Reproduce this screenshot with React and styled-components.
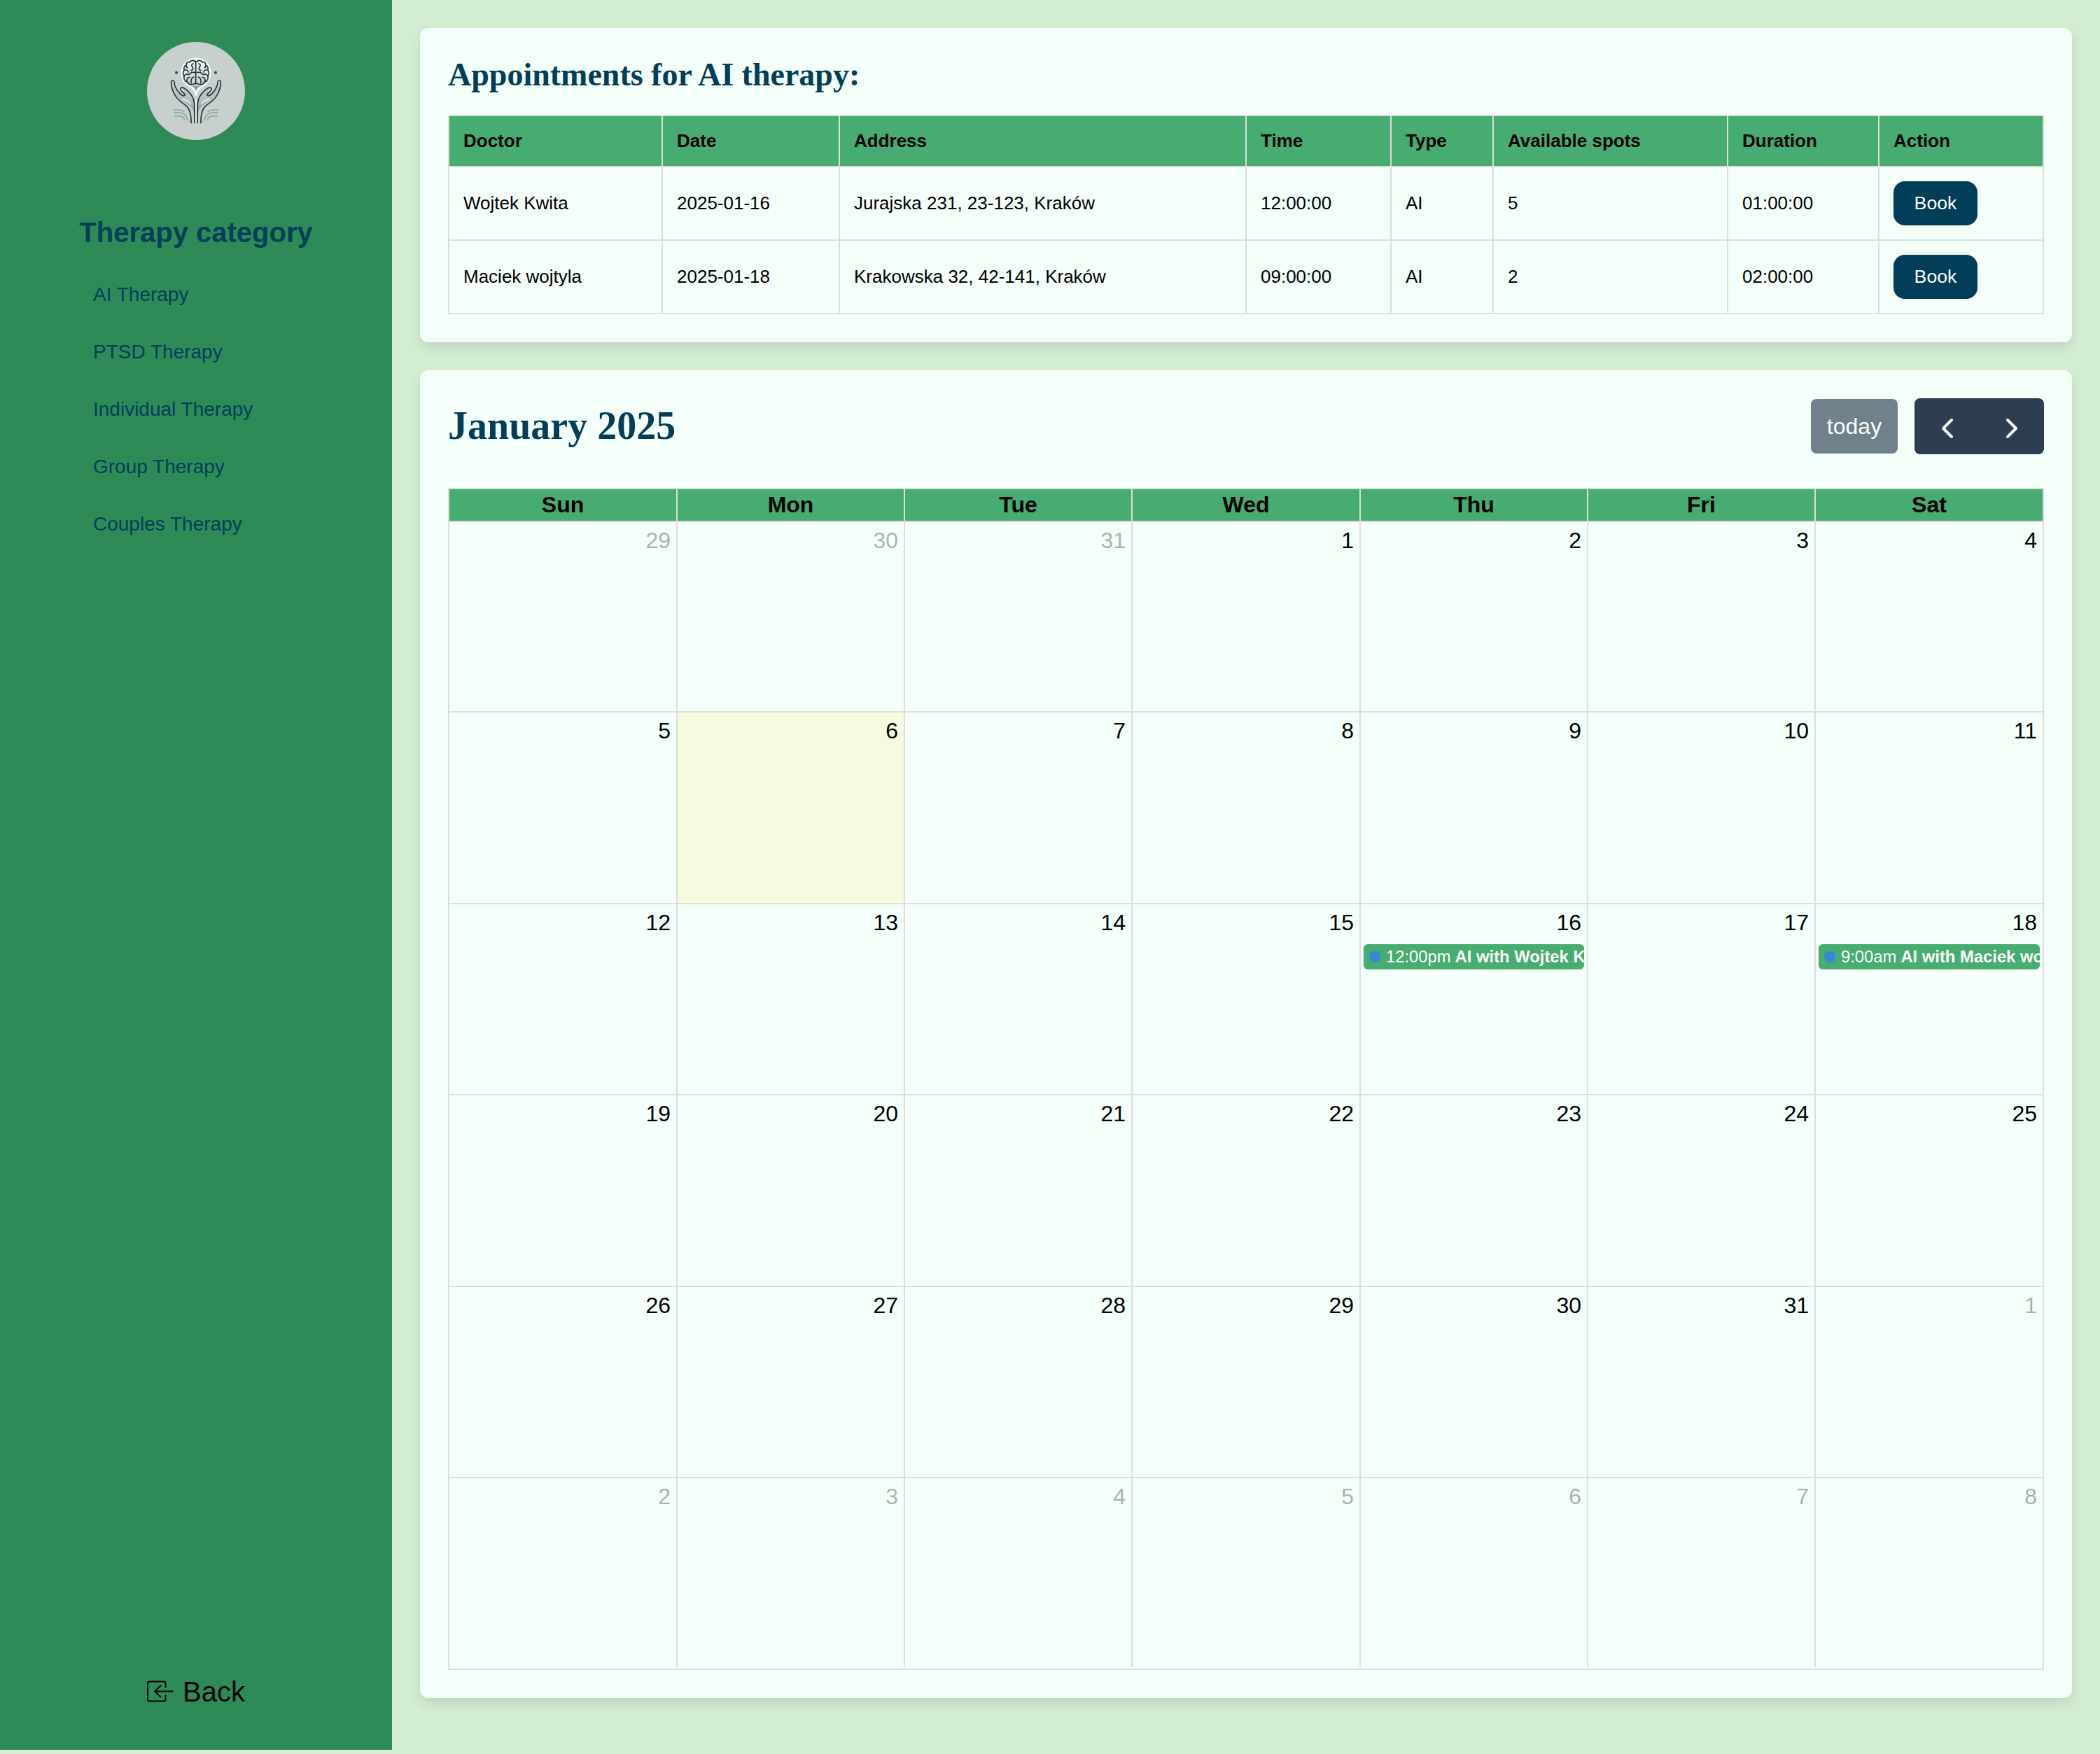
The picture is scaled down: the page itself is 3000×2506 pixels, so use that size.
import React from 'react';
import styled, { createGlobalStyle } from 'styled-components';

const sans = '"Liberation Sans", Arial, Helvetica, sans-serif';
const serif = '"Liberation Serif", "Times New Roman", serif';

const GlobalStyle = createGlobalStyle`
  *, *::before, *::after { box-sizing: border-box; }
  body { margin: 0; background: #d3edd2; font-family: ${sans}; color: #000; }
`;

const Page = styled.div`
  display: flex;
  align-items: flex-start;
  width: 3000px;
  height: 2506px;
  background: #d3edd2;
`;

const Sidebar = styled.aside`
  display: flex;
  flex-direction: column;
  align-items: center;
  width: 560px;
  height: 2500px;
  padding: 60px 40px;
  background: #2e8b57;
`;

const SidebarTitle = styled.h2`
  margin: 109px 0 0;
  color: #023e58;
  font-size: 40px;
  line-height: 46px;
  font-weight: 700;
`;

const Menu = styled.nav`
  display: flex;
  flex-direction: column;
  gap: 50px;
  align-self: stretch;
  margin-top: 50px;
  padding-left: 93px;
`;

const MenuLink = styled.a`
  color: #023e58;
  font-size: 28px;
  line-height: 32px;
`;

const BackButton = styled.button`
  display: flex;
  align-items: center;
  gap: 11px;
  margin-top: auto;
  padding: 0;
  border: 0;
  background: none;
  color: #000;
  font: 40px/46px ${sans};
`;

const Main = styled.main`
  display: flex;
  flex-direction: column;
  gap: 40px;
  flex: 1;
  padding: 40px;
`;

const Card = styled.section`
  height: ${(p) => p.$height}px;
  padding: 40px;
  border-radius: 12px;
  background: #f5fffa;
  box-shadow: 0 8px 16px rgba(0, 0, 0, 0.1);
`;

const CardTitle = styled.h2`
  margin: 0 0 31px;
  color: #023e58;
  font: 700 46px/53px ${serif};
`;

const Table = styled.table`
  width: 2280px;
  table-layout: fixed;
  border-collapse: collapse;
  font-size: 26px;
  line-height: 30px;
  text-align: left;
`;

const HeadCell = styled.th`
  height: 73px;
  padding: 0 0 2px 20px;
  border: 2px solid #ddd;
  background: #46ac72;
`;

const Cell = styled.td`
  height: 105px;
  padding: 0 0 ${(p) => (p.$action ? 0 : 2)}px 20px;
  border: 2px solid #ddd;
`;

const BookButton = styled.button`
  display: block;
  width: 120px;
  height: 63px;
  padding: 0 0 2px;
  border: 0;
  border-radius: 16px;
  background: #023e58;
  color: #fff;
  font: 26.67px/30px ${sans};
`;

const Toolbar = styled.header`
  display: flex;
  align-items: center;
  justify-content: space-between;
  height: 80px;
  margin-bottom: 48px;
`;

const MonthTitle = styled.h2`
  margin: 0 0 2px;
  color: #023e58;
  font: 700 56px/64px ${serif};
`;

const ToolbarActions = styled.div`
  display: flex;
  align-items: center;
  gap: 24px;
`;

const TodayButton = styled.button`
  width: 124px;
  height: 78px;
  padding: 0;
  border: 0;
  border-radius: 8px;
  background: #2c3e50;
  color: #fff;
  opacity: 0.65;
  font: 32px/36px ${sans};
`;

const ButtonGroup = styled.div`
  display: flex;
  overflow: hidden;
  border-radius: 8px;
`;

const ArrowButton = styled.button`
  display: flex;
  align-items: center;
  justify-content: center;
  width: ${(p) => p.$width}px;
  height: 80px;
  padding: 6px 1px 0 0;
  border: 0;
  background: #2c3e50;
`;

const Calendar = styled.div`
  border: 2px solid #ddd;
  padding-bottom: 2px;
`;

const Week = styled.div`
  display: grid;
  grid-template-columns: 326px 325px 325px 326px 325px 325px 324px;
  height: ${(p) => p.$height}px;
`;

const DayName = styled.div`
  padding-top: 4px;
  border-right: 2px solid #ddd;
  border-bottom: 2px solid #ddd;
  background: #46ac72;
  font-size: 32px;
  line-height: 37px;
  font-weight: 700;
  text-align: center;
  &:last-child { border-right: 0; }
`;

const Day = styled.div`
  min-width: 0;
  border-right: 2px solid #ddd;
  border-bottom: ${(p) => (p.$last ? 0 : '2px solid #ddd')};
  background: ${(p) => (p.$today ? '#f6fade' : 'transparent')};
  &:last-child { border-right: 0; }
`;

const DayNumber = styled.div`
  padding: 8px 8px 0;
  font-size: 32px;
  line-height: 37px;
  text-align: right;
  opacity: ${(p) => (p.$muted ? 0.3 : 1)};
`;

const Event = styled.div`
  display: flex;
  align-items: center;
  height: 36px;
  margin: 12px 4px 0;
  overflow: hidden;
  border-radius: 6px;
  background: #46ac72;
  color: #fff;
  font-size: 23.8px;
  line-height: 28px;
  white-space: nowrap;
`;

const EventDot = styled.span`
  flex: none;
  width: 16px;
  height: 16px;
  margin: 0 8px;
  border-radius: 50%;
  background: #3788d8;
`;

const EventTime = styled.span`
  flex: none;
  margin-right: 6px;
`;

const EventTitle = styled.span`
  flex: 1;
  min-width: 0;
  overflow: hidden;
  font-weight: 700;
`;

const side = (
  <g>
    <path
      d="M266 405 C266 372 262 352 246 337 C228 321 200 313 186 292 C172 271 163 253 164 232 C165 223 175 223 176 232 C176 248 184 262 198 278 C204 284 212 289 218 291 C224 290 222 284 216 279 C206 271 201 262 205 257 C212 252 224 260 234 269 C250 284 262 299 266 322"
      fill="url(#hand)"
      stroke="none"
    />
    <path
      d="M249 407 C250 372 246 352 232 337 C216 322 196 314 183 293 C171 273 162 255 164 231 C165 223 175 223 177 231 C177 248 184 262 198 278 C205 286 214 292 220 290 C226 286 221 282 216 279 C206 271 201 262 205 257 C212 252 224 260 234 269 C251 284 261 300 263 325 L264 407"
      fill="none"
      stroke="#24343a"
      strokeWidth="5"
    />
    <path d="M213 306 C228 308 240 314 246 324" fill="none" stroke="#f5f8f7" strokeWidth="4.500" />
    <g fill="none" stroke="#86a5a2" strokeWidth="5">
      <path d="M177 351 H196 C207 351 214 354 218 359" />
      <path d="M177 363 H196 C216 363 228 374 234 394" />
      <path d="M179 377 H192 C208 377 216 383 221 393" />
    </g>
    <circle cx="186" cy="191.500" r="6" fill="#24454d" />
  </g>
);

const brainHalf = (
  <g fill="none" stroke="#1f2f36" strokeWidth="4.800">
    <path d="M267 145 C262 137 248 137 244 146 C233 143 226 151 228 160 C219 163 216 172 220 180 C213 187 213 200 219 207 C216 219 222 230 233 231 C238 244 257 246 267 236" />
    <path d="M258 153 C249 155 250 163 255 167 C260 173 257 180 250 181" />
    <path d="M228 160 C226 165 229 170 234 170" />
    <path d="M220 180 C229 178 237 182 237 190" />
    <path d="M219 207 C222 199 231 196 237 200 C243 198 250 196 250 190 H267" />
    <path d="M233 231 C228 222 232 211 243 211" />
    <path d="M250 236 C246 226 250 214 260 210" />
  </g>
);

const Logo = () => (
  <svg width="140" height="140" viewBox="60 60 420 420" strokeLinecap="round" strokeLinejoin="round">
    <defs>
      <linearGradient id="hand" x1="0" y1="0" x2="0" y2="1">
        <stop offset="0" stopColor="#cdd3d2" />
        <stop offset="0.500" stopColor="#b3bcbb" />
        <stop offset="1" stopColor="#66787a" />
      </linearGradient>
      <linearGradient id="bulb" x1="0" y1="0" x2="0" y2="1">
        <stop offset="0" stopColor="#f1f4f4" />
        <stop offset="1" stopColor="#b9c2c3" />
      </linearGradient>
    </defs>
    <circle cx="270" cy="270" r="210" fill="#c8d0ce" />
    {side}
    <g transform="translate(540 0) scale(-1 1)">{side}</g>
    <path d="M270 310 V406" stroke="#f2f5f4" strokeWidth="6" />
    <path
      d="M270 288 C269 268 256 256 240 249 C221 240 209 218 209 192 C209 156 236 130 270 130 C304 130 331 156 331 192 C331 218 319 240 300 249 C284 256 271 268 270 288 Z"
      fill="url(#bulb)"
      stroke="#fff"
      strokeWidth="6"
    />
    <path d="M256 248 H284 L270 266 Z" fill="#8e9a9c" />
    {brainHalf}
    <g transform="translate(540 0) scale(-1 1)">{brainHalf}</g>
    <path d="M269 142 V240" stroke="#1f2f36" strokeWidth="5" />
  </svg>
);

const BackIcon = () => (
  <svg width="40" height="40" viewBox="0 0 40 40" fill="none" stroke="#000" strokeWidth="2" strokeLinecap="round" strokeLinejoin="round">
    <path d="M26.500 13.500 V8 Q26.500 5.500 24 5.500 H3.500 Q1 5.500 1 8 V31 Q1 33.500 3.500 33.500 H24 Q26.500 33.500 26.500 31 V25.500" />
    <path d="M36.500 19.500 H11.500 M19.500 11.500 L11 19.500 L19.500 27.500" />
  </svg>
);

const Chevron = ({ right }) => (
  <svg width="20" height="30" viewBox="0 0 20 30" fill="none" stroke="#fff" strokeWidth="4" strokeLinecap="round" strokeLinejoin="round">
    <path d={right ? 'M4 3 L16 15 L4 27' : 'M16 3 L4 15 L16 27'} />
  </svg>
);

const menu = ['AI Therapy', 'PTSD Therapy', 'Individual Therapy', 'Group Therapy', 'Couples Therapy'];

const columns = [
  ['Doctor', 305],
  ['Date', 253],
  ['Address', 581],
  ['Time', 207],
  ['Type', 146],
  ['Available spots', 335],
  ['Duration', 216],
  ['Action', 235],
];

const appointments = [
  ['Wojtek Kwita', '2025-01-16', 'Jurajska 231, 23-123, Kraków', '12:00:00', 'AI', '5', '01:00:00'],
  ['Maciek wojtyla', '2025-01-18', 'Krakowska 32, 42-141, Kraków', '09:00:00', 'AI', '2', '02:00:00'],
];

const dayNames = ['Sun', 'Mon', 'Tue', 'Wed', 'Thu', 'Fri', 'Sat'];
const weekHeights = [272, 274, 273, 274, 273, 270];
const events = {
  16: ['12:00pm', 'AI with Wojtek Kwita'],
  18: ['9:00am', 'AI with Maciek wojtyla'],
};

const weeks = weekHeights.map((height, w) => ({
  height,
  days: dayNames.map((_, d) => {
    const date = new Date(2024, 11, 29 + w * 7 + d);
    return { number: date.getDate(), inMonth: date.getMonth() === 0 };
  }),
}));

export default function App() {
  return (
    <>
      <GlobalStyle />
      <Page>
        <Sidebar>
          <Logo />
          <SidebarTitle>Therapy category</SidebarTitle>
          <Menu>
            {menu.map((item) => (
              <MenuLink key={item}>{item}</MenuLink>
            ))}
          </Menu>
          <BackButton>
            <BackIcon />
            Back
          </BackButton>
        </Sidebar>
        <Main>
          <Card $height={449}>
            <CardTitle>Appointments for AI therapy:</CardTitle>
            <Table>
              <colgroup>
                {columns.map(([name, width]) => (
                  <col key={name} width={width} />
                ))}
              </colgroup>
              <thead>
                <tr>
                  {columns.map(([name]) => (
                    <HeadCell key={name}>{name}</HeadCell>
                  ))}
                </tr>
              </thead>
              <tbody>
                {appointments.map((row) => (
                  <tr key={row[0]}>
                    {row.map((value, i) => (
                      <Cell key={i}>{value}</Cell>
                    ))}
                    <Cell $action>
                      <BookButton>Book</BookButton>
                    </Cell>
                  </tr>
                ))}
              </tbody>
            </Table>
          </Card>
          <Card $height={1897}>
            <Toolbar>
              <MonthTitle>January 2025</MonthTitle>
              <ToolbarActions>
                <TodayButton>today</TodayButton>
                <ButtonGroup>
                  <ArrowButton $width={94}><Chevron /></ArrowButton>
                  <ArrowButton $width={91}><Chevron right /></ArrowButton>
                </ButtonGroup>
              </ToolbarActions>
            </Toolbar>
            <Calendar>
              <Week $height={47}>
                {dayNames.map((name) => (
                  <DayName key={name}>{name}</DayName>
                ))}
              </Week>
              {weeks.map(({ height, days }, w) => (
                <Week key={w} $height={height}>
                  {days.map(({ number, inMonth }) => {
                    const event = inMonth && events[number];
                    return (
                      <Day key={number} $last={w === 5} $today={inMonth && number === 6}>
                        <DayNumber $muted={!inMonth}>{number}</DayNumber>
                        {event && (
                          <Event>
                            <EventDot />
                            <EventTime>{event[0]}</EventTime>
                            <EventTitle>{event[1]}</EventTitle>
                          </Event>
                        )}
                      </Day>
                    );
                  })}
                </Week>
              ))}
            </Calendar>
          </Card>
        </Main>
      </Page>
    </>
  );
}
